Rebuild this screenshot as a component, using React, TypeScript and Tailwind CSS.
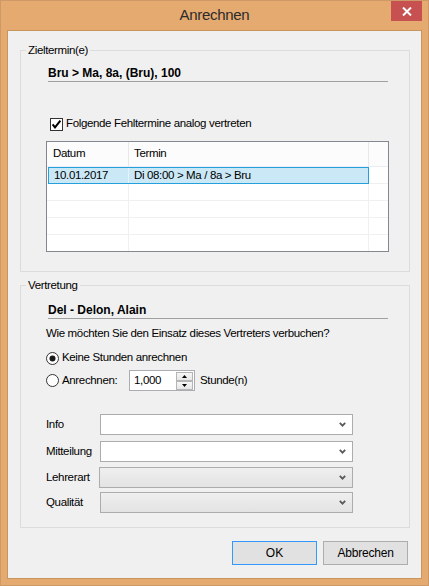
import type { ReactNode } from "react";

const ui = "font-['Liberation_Sans',Arial,sans-serif] text-[11.5px] tracking-[-0.35px] text-black";

function Chevron() {
  return (
    <svg width="7" height="5" viewBox="0 0 7 5" className="block">
      <polyline points="0.8,0.8 3.5,3.6 6.2,0.8" fill="none" stroke="#5a5a5a" strokeWidth="1.8" />
    </svg>
  );
}

function CheckBox() {
  return (
    <svg width="13" height="13" viewBox="0 0 13 13" className="block shrink-0">
      <rect x="0.5" y="0.5" width="12" height="12" fill="#fff" stroke="#333" />
      <polyline points="2.6,6.4 5,9.4 10.4,2.6" fill="none" stroke="#000" strokeWidth="2" />
    </svg>
  );
}

function Radio({ checked }: { checked?: boolean }) {
  return (
    <svg width="13" height="13" viewBox="0 0 13 13" className="block shrink-0">
      <circle cx="6.5" cy="6.5" r="6" fill="#fff" stroke="#333" />
      {checked && <circle cx="6.5" cy="6.5" r="3" fill="#1a1a1a" />}
    </svg>
  );
}

function GroupBox({
  title,
  className,
  children,
}: {
  title: string;
  className?: string;
  children: ReactNode;
}) {
  return (
    <fieldset className={`ml-[12px] mr-[11px] border border-[#dcdcdc] ${className ?? ""}`}>
      <legend className="ml-[5px] px-[2px] leading-[16px]">{title}</legend>
      {children}
    </fieldset>
  );
}

function Combo({ disabled, className }: { disabled?: boolean; className?: string }) {
  return (
    <div
      className={`h-[21px] border border-[#acacac] flex items-center justify-end pr-[6px] ${
        disabled ? "bg-linear-to-b from-[#efefef] to-[#e3e3e3]" : "bg-white"
      } ${className ?? ""}`}
    >
      <Chevron />
    </div>
  );
}

function ComboRow({
  label,
  labelWidth = "w-[54px]",
  comboWidth = "w-[253px]",
  disabled,
  className,
}: {
  label: string;
  labelWidth?: string;
  comboWidth?: string;
  disabled?: boolean;
  className?: string;
}) {
  return (
    <div className={`flex items-center ${className ?? ""}`}>
      <span className={`${labelWidth} shrink-0`}>{label}</span>
      <Combo disabled={disabled} className={comboWidth} />
    </div>
  );
}

function EmptyRow({ last }: { last?: boolean }) {
  return (
    <div className={`flex ${last ? "h-[16px]" : "h-[17px] border-b border-[#f0f0f0]"}`}>
      <div className="w-[82px] border-r border-[#f0f0f0]" />
      <div className="w-[240px] border-r border-[#f0f0f0]" />
      <div className="flex-1" />
    </div>
  );
}

function SpinButton({ up }: { up?: boolean }) {
  return (
    <div className="h-[9px] w-[17px] border border-[#b5b5b5] bg-linear-to-b from-[#f6f6f6] to-[#e6e6e6] flex items-center justify-center">
      <svg width="5" height="3" viewBox="0 0 5 3" className="block">
        <polygon points={up ? "0,3 5,3 2.5,0" : "0,0 5,0 2.5,3"} fill="#000" />
      </svg>
    </div>
  );
}

export default function App() {
  return (
    <div className={`w-[429px] h-[586px] bg-[#e5aa70] border border-[#cd9966] flex flex-col px-[6px] pb-[6px] ${ui}`}>
      <div className="h-[29px] flex shrink-0">
        <div className="w-[31px]" />
        <div className="flex-1 text-center pt-[4px] text-[15px] leading-[20px] tracking-[-0.3px] text-[#2b2b2b]">
          Anrechnen
        </div>
        <div className="w-[31px] h-[20px] bg-[#c75050] flex items-center justify-center">
          <svg width="10" height="9" viewBox="0 0 10 9" className="block">
            <path d="M1 0.5 L9 8.5 M9 0.5 L1 8.5" stroke="#fff" strokeWidth="2" />
          </svg>
        </div>
      </div>

      <div className="flex-1 border border-[#c8955f] bg-[#f0f0f0] flex flex-col">
        <GroupBox title="Zieltermin(e)" className="mt-[11px]">
          <div className="pt-[8px] pl-[25px] pb-[19px]">
            <div className="ml-[2px] w-[340px] border-b border-[#a0a0a0] font-bold text-[12px] tracking-normal leading-[15px]">
              Bru &gt; Ma, 8a, (Bru), 100
            </div>
            <div className="mt-[34px] ml-[4px] h-[16px] flex items-center gap-[3px]">
              <CheckBox />
              <span>Folgende Fehltermine analog vertreten</span>
            </div>
            <div className="mt-[9px] w-[343px] h-[111px] border border-[#828790] bg-white flex flex-col">
              <div className="h-[25px] flex bg-[#fcfcfc] border-b border-[#eaeef4]">
                <div className="w-[82px] border-r border-[#e8e8e8] pl-[6px] flex items-center">Datum</div>
                <div className="w-[240px] border-r border-[#e8e8e8] pl-[5px] flex items-center">Termin</div>
                <div className="flex-1" />
              </div>
              <div className="h-[17px] flex">
                <div className="w-[1px]" />
                <div className="w-[321px] border border-[#26a0da] bg-[#cbe8f6] flex">
                  <div className="w-[80px] border-r border-[#e6f3fa] pl-[5px] flex items-center">10.01.2017</div>
                  <div className="flex-1 pl-[5px] flex items-center">Di 08:00 &gt; Ma / 8a &gt; Bru</div>
                </div>
                <div className="flex-1 border-b border-[#f0f0f0]" />
              </div>
              <EmptyRow />
              <EmptyRow />
              <EmptyRow />
              <EmptyRow last />
            </div>
          </div>
        </GroupBox>

        <GroupBox title="Vertretung" className="mt-[5px]">
          <div className="pt-[10px] pl-[25px] pb-[14px]">
            <div className="ml-[2px] w-[340px] border-b border-[#a0a0a0] font-bold text-[12px] tracking-normal leading-[15px]">
              Del - Delon, Alain
            </div>
            <div className="mt-[6px] leading-[16px]">Wie möchten Sie den Einsatz dieses Vertreters verbuchen?</div>
            <div className="mt-[9px] h-[16px] flex items-center gap-[3px]">
              <Radio checked />
              <span>Keine Stunden anrechnen</span>
            </div>
            <div className="mt-[4px] h-[21px] flex items-center">
              <Radio />
              <span className="ml-[3px] w-[67px]">Anrechnen:</span>
              <div className="w-[66px] h-[21px] border border-[#abadb3] bg-white flex items-center">
                <span className="flex-1 pl-[4px]">1,000</span>
                <div className="flex flex-col mr-[1px]">
                  <SpinButton up />
                  <SpinButton />
                </div>
              </div>
              <span className="ml-[5px]">Stunde(n)</span>
            </div>
            <ComboRow label="Info" className="mt-[23px]" />
            <ComboRow label="Mitteilung" className="mt-[6px]" />
            <ComboRow label="Lehrerart" labelWidth="w-[53px]" comboWidth="w-[254px]" disabled className="mt-[5px]" />
            <ComboRow label="Qualität" disabled className="mt-[4px]" />
          </div>
        </GroupBox>

        <div className="mt-[13px] pr-[13px] flex justify-end gap-[6px]">
          <button className="w-[85px] h-[24px] bg-[#e1e1e1] border border-[#3399ff] tracking-normal text-[12px]">OK</button>
          <button className="w-[85px] h-[24px] bg-[#e1e1e1] border border-[#adadad] tracking-[-0.2px] text-[12px]">Abbrechen</button>
        </div>
      </div>
    </div>
  );
}
